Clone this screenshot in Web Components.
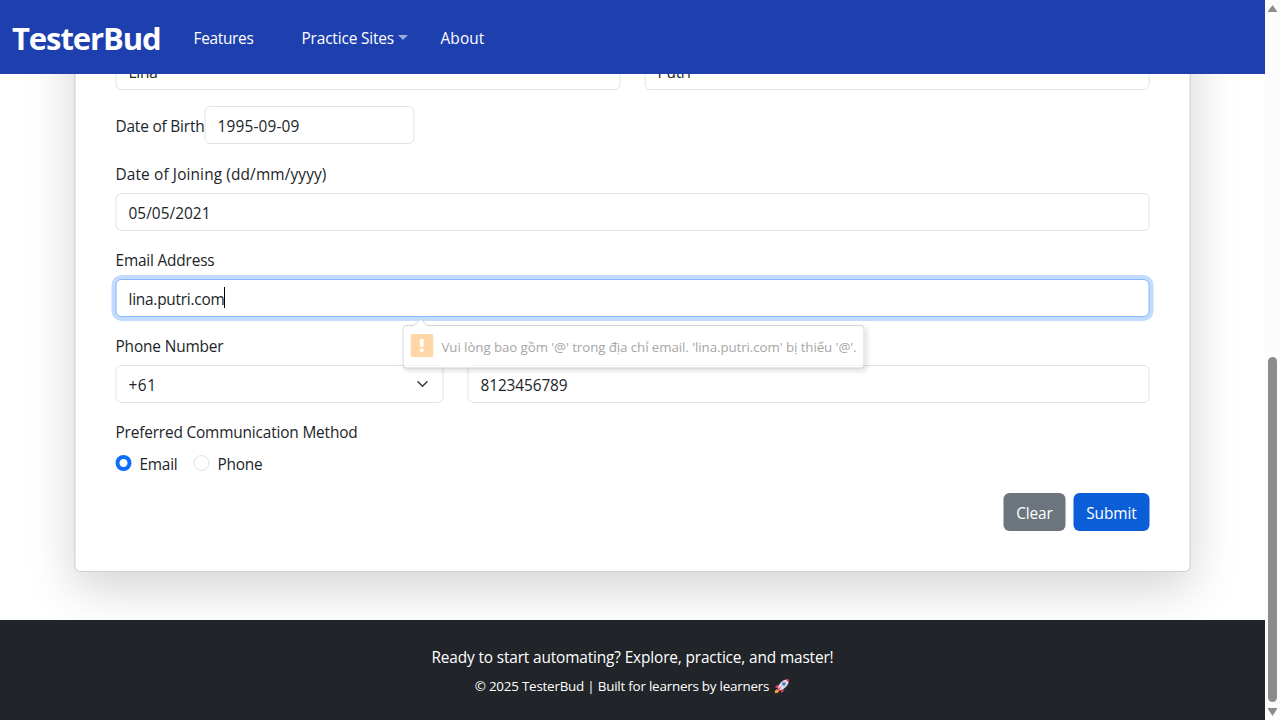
<!DOCTYPE html>
<html lang="en">
<head>
<meta charset="utf-8">
<title>TesterBud</title>
<style>
html, body { margin: 0; height: 720px; overflow: hidden; background: #fff; }
body { font: 15.4px/24px "Open Sans", "Noto Sans", sans-serif; color: #212529; }
</style>
</head>
<body>
<app-shell>
  <nav-bar slot="header"></nav-bar>
  <form-card>
    <field-row>
      <text-field><fit-text w="29">Lina</fit-text></text-field>
      <text-field><fit-text w="33">Putri</fit-text></text-field>
    </field-row>
    <inline-field>
      <fit-text slot="label" w="89">Date of Birth</fit-text>
      <text-field><fit-text w="82">1995-09-09</fit-text></text-field>
    </inline-field>
    <form-group>
      <fit-text slot="label" w="211">Date of Joining (dd/mm/yyyy)</fit-text>
      <text-field><fit-text w="82">05/05/2021</fit-text></text-field>
    </form-group>
    <form-group>
      <fit-text slot="label" w="99">Email Address</fit-text>
      <text-field focused><fit-text w="96">lina.putri.com</fit-text></text-field>
      <validation-bubble slot="bubble"><fit-text w="415">Vui lòng bao gồm '@' trong địa chỉ email. 'lina.putri.com' bị thiếu '@'.</fit-text></validation-bubble>
    </form-group>
    <form-group>
      <fit-text slot="label" w="108">Phone Number</fit-text>
      <field-row split>
        <text-field select><fit-text w="28">+61</fit-text></text-field>
        <text-field><fit-text w="87">8123456789</fit-text></text-field>
      </field-row>
    </form-group>
    <form-group>
      <fit-text slot="label" w="242">Preferred Communication Method</fit-text>
      <radio-group>
        <radio-option checked><fit-text w="38">Email</fit-text></radio-option>
        <radio-option><fit-text w="45">Phone</fit-text></radio-option>
      </radio-group>
    </form-group>
    <action-button slot="actions"><fit-text w="36.5">Clear</fit-text></action-button>
    <action-button slot="actions" primary><fit-text w="50.5">Submit</fit-text></action-button>
  </form-card>
  <page-footer slot="footer"></page-footer>
  <scroll-track slot="scroll"></scroll-track>
</app-shell>
<script>
const define = (name, html, setup) => {
  const template = document.createElement('template');
  template.innerHTML = html;
  customElements.define(name, class extends HTMLElement {
    constructor() {
      super();
      this.attachShadow({ mode: 'open' }).append(template.content.cloneNode(true));
    }
    connectedCallback() { if (setup) setup(this); }
  });
};

define('app-shell', `<style>
:host{display:grid;grid-template-columns:1265px 15px;height:720px;overflow:hidden}
.page{display:flex;flex-direction:column;height:720px;min-width:0}
main{flex:1;min-height:0;overflow:hidden;display:flex;flex-direction:column;justify-content:flex-end;align-items:center;padding-bottom:48px;box-sizing:border-box}
</style><div class="page"><slot name="header"></slot><main><slot></slot></main><slot name="footer"></slot></div><slot name="scroll"></slot>`);

define('nav-bar', `<style>
:host{display:flex;align-items:center;box-sizing:border-box;height:74px;flex:none;padding:2px 12px 0;background:#1e40af;color:#fff}
.brand{--drop:0px;font-size:31px;line-height:48px;font-weight:700;margin-right:33px}
.drop{margin:0 33px 0 48px;display:flex;align-items:center;gap:3.5px}
i{border:5px solid transparent;border-top-color:rgba(255,255,255,.55);border-bottom:0;margin-top:-2px;width:0}
</style><fit-text class="brand" w="148.5">TesterBud</fit-text><fit-text w="60">Features</fit-text>
<span class="drop"><fit-text w="92.5">Practice Sites</fit-text><i></i></span><fit-text w="44">About</fit-text>`);

define('form-card', `<style>
:host{display:block;flex:none;box-sizing:border-box;width:1116px;margin-left:1px;transform:translateX(-.5px);padding:40px;border:1px solid rgba(0,0,0,.175);border-radius:6px;background:#fff;box-shadow:0 16px 48px rgba(0,0,0,.175)}
.fields{display:flex;flex-direction:column;gap:16px}
.actions{display:flex;justify-content:flex-end;gap:8px;margin-top:18px}
</style><div class="fields"><slot></slot></div><div class="actions"><slot name="actions"></slot></div>`);

define('field-row', `<style>
:host{display:grid;grid-template-columns:1fr 1fr;gap:24px}
:host([split]){grid-template-columns:328px 1fr}
</style><slot></slot>`);

define('inline-field', `<style>
:host{display:flex;align-items:center;height:39px}
::slotted(text-field){width:210px;margin-bottom:1px}
::slotted(fit-text){margin-top:1px}
</style><slot name="label"></slot><slot></slot>`);

define('form-group', `<style>
:host{display:flex;flex-direction:column;gap:8px;position:relative}
.label{height:24px;padding-top:1px;box-sizing:border-box}
::slotted(validation-bubble){position:absolute;left:287px;top:71px;z-index:2}
</style><div class="label"><slot name="label"></slot></div><slot></slot><slot name="bubble"></slot>`);

define('text-field', `<style>
:host{display:flex;align-items:center;box-sizing:border-box;height:38px;padding:1px 12px 0;border:1px solid #dee2e6;border-radius:6px;background:#fff}
:host([focused]){border-color:#86b7fe;box-shadow:0 0 0 4px rgba(13,110,253,.25);padding-top:2px}
.caret,svg{display:none}
:host([focused]) .caret{display:block;width:1px;height:21px;background:#000;margin-top:-3px;transform:translateX(-.5px)}
:host([select]) svg{display:block;margin:-2px 0 0 auto}
</style><slot></slot><span class="caret"></span><svg width="16" height="12" viewBox="0 0 16 16"><path fill="none" stroke="#343a40" stroke-linecap="round" stroke-linejoin="round" stroke-width="2" d="m2 5 6 6 6-6"/></svg>`);

define('validation-bubble', `<style>
:host{--drop:0px;display:flex;align-items:center;box-sizing:border-box;width:462px;height:50px;padding:7px 8px 0 8px;color:#a6a6a6;font-size:13.3px}
.back{position:absolute;inset:0;z-index:-1}
.shade{position:absolute;inset:7px 0 0;border-radius:4px;box-shadow:2px 3px 5px rgba(0,0,0,.13);z-index:-1}
.icon{margin:-3px 8px 0 0;flex:none}
</style><div class="shade"></div><svg class="back" width="462" height="51"><path d="M3.5 7.5H11.5L18 1L24.5 7.5H458.5Q461.5 7.5 461.5 10.5V47Q461.5 50 458.5 50H3.5Q.5 50 .5 47V10.5Q.5 7.5 3.5 7.5Z" fill="#fff" fill-opacity=".6" stroke="#d2d2d2"/><path d="M12.5 7.5L18 2L23.5 7.5Z" fill="#fff" fill-opacity=".7"/></svg>
<svg class="icon" width="23" height="23"><rect width="23" height="23" rx="1.5" fill="#ffd6a5"/><path d="M9.5 5h3.6v7.7H9.5z" fill="#fff"/><circle cx="11.3" cy="16.2" r="1.9" fill="#fff"/></svg><slot></slot>`);

define('radio-group', `<style>:host{display:flex;gap:16px;height:24px}</style><slot></slot>`);
define('radio-option', `<style>
:host{display:flex;align-items:center;gap:8px;padding-top:1px;box-sizing:border-box}
i{box-sizing:border-box;width:16px;height:16px;border:1px solid #dee2e6;border-radius:50%;background:#fff;margin-top:-1px}
:host([checked]) i{border:none;background:radial-gradient(circle,#fff 3.6px,#0d6efd 4.4px)}
</style><i></i><slot></slot>`);

define('action-button', `<style>
:host{display:flex;align-items:center;box-sizing:border-box;height:38px;padding:2px 12.75px 0;border-radius:6px;color:#fff;background:#6c757d}
:host([primary]){background:#0b5ed7}
</style><slot></slot>`);

define('page-footer', `<style>
:host{display:flex;flex-direction:column;align-items:center;box-sizing:border-box;height:100px;flex:none;padding-top:25px;background:#212529;color:#fff}
.small{--drop:0px;display:flex;align-items:center;gap:5px;margin-top:6px;font-size:13.4px;line-height:22px}
svg{margin-top:-1px}
</style><fit-text w="402">Ready to start automating? Explore, practice, and master!</fit-text>
<span class="small"><fit-text w="294.5">© 2025 TesterBud | Built for learners by learners</fit-text><svg width="16" height="16" viewBox="0 0 16 16"><path d="M4.5 6.2 1.2 8.5 2 10.2 5 9M7 13l.2 2 2.2-1.6.5-4" fill="#e83a68"/><path d="M4.2 10.4 1 12.4.8 15.2 4 14.8 5.8 12z" fill="#f5a13c"/><path d="M3.8 10.2C5.3 5.2 8.6 1.6 12.7 1.4l2 2C14.3 7.4 10.8 10.7 6 12.4Z" fill="#dfd8e5"/><path d="M11.6 1.4 15 .9 14.7 4.5Z" fill="#f02d4e"/><path d="M7.8 8 4.3 13 3 11.5Z" fill="#e83a68"/><circle cx="9.9" cy="5.8" r="1.9" fill="#477fbd"/></svg></span>`);

define('scroll-track', `<style>
:host{display:flex;flex-direction:column;align-items:center;box-sizing:border-box;height:720px;padding:5px 0 4px;background:#fcfcfc}
.thumb{width:9px;height:345px;border-radius:5px;background:#8b8b8b;margin:auto 0 6px}
svg{flex:none}
</style><svg width="9" height="7"><path d="M4.5 0 9 6.2V7H0V6.2Z" fill="#8b8b8b"/></svg><div class="thumb"></div><svg width="9" height="8"><path d="M0 0H9V1L4.5 8 0 1Z" fill="#8b8b8b"/></svg>`);

/* Tracks a single line of text so that its advance equals the "w" attribute.
   --drop lowers the baseline without changing the height of the line.
   Defined last: it measures with the font its styled parents pass down. */
define('fit-text', `<style>:host{display:inline-block;white-space:nowrap;flex:none;vertical-align:top}span{display:block;width:max-content;white-space:nowrap;padding-top:var(--drop,1px);margin-bottom:calc(-1 * var(--drop,1px))}</style><span><slot></slot></span>`, el => {
  const target = +el.getAttribute('w');
  const span = el.shadowRoot.querySelector('span');
  const natural = span.getBoundingClientRect().width;
  if (!natural) return;
  span.style.letterSpacing = ((target - natural) / [...el.textContent].length) + 'px';
  el.style.width = target + 'px';
});
</script>
</body>
</html>
